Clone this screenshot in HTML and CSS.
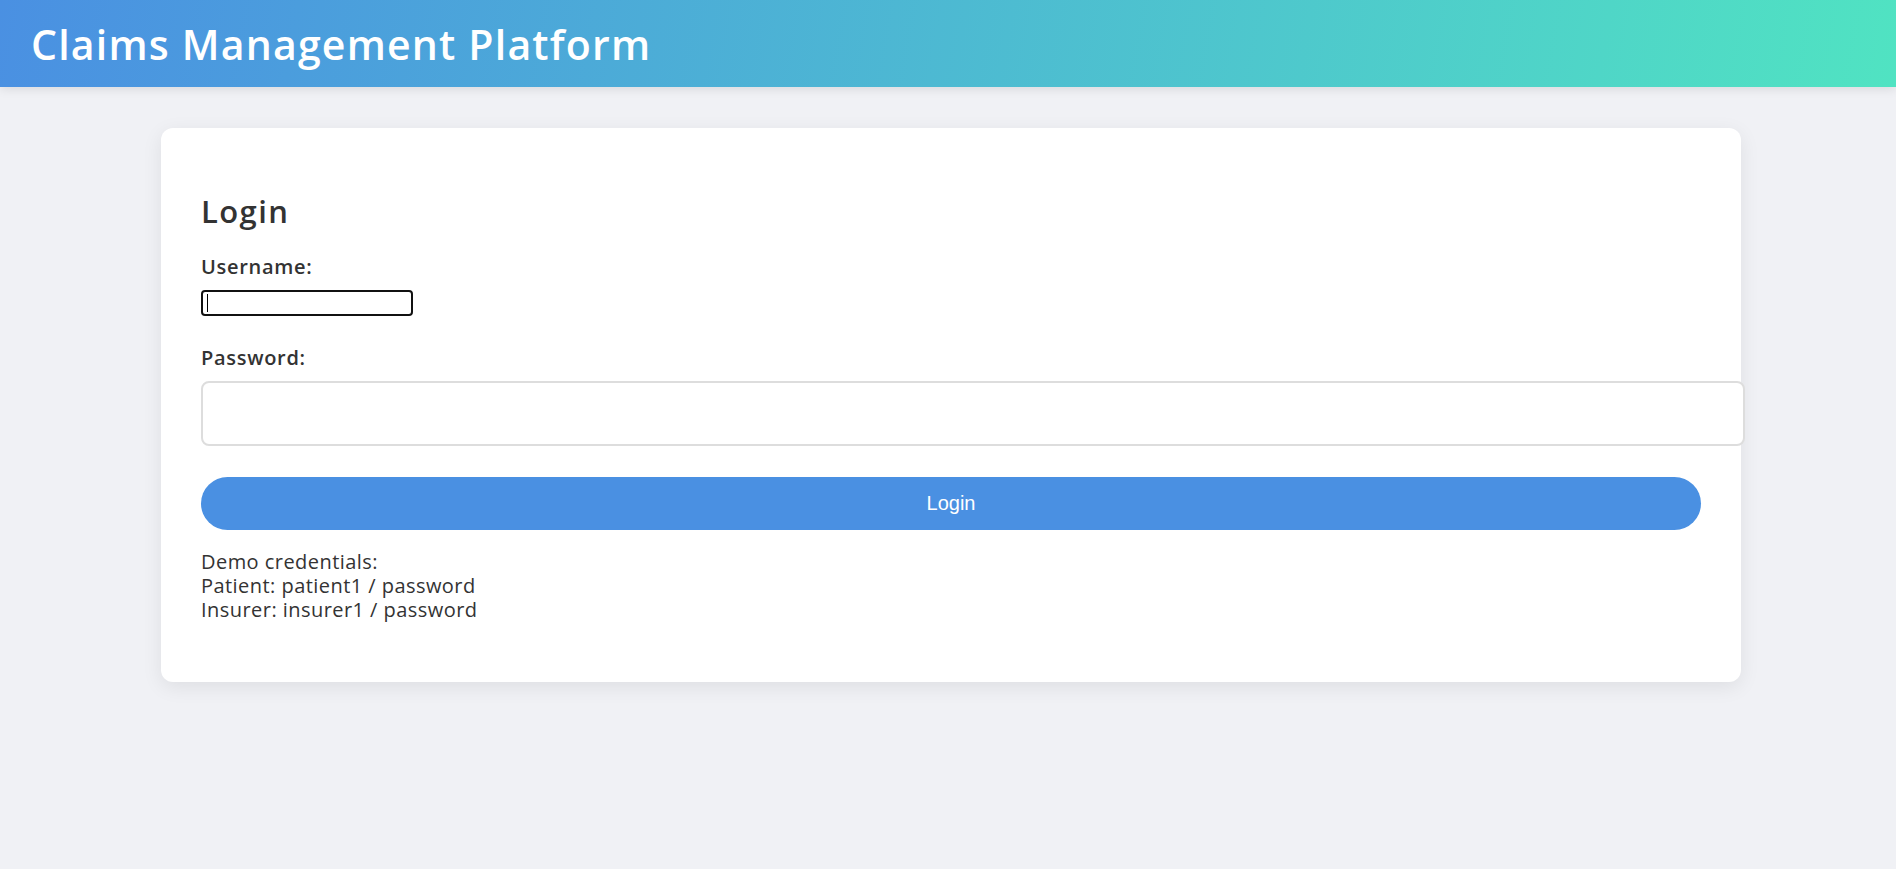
FILE: index.html
```html
<!DOCTYPE html>
<html lang="en">
<head>
<meta charset="utf-8">
<title>Claims Management Platform</title>
<link rel="stylesheet" href="styles.css">
</head>
<body>
<header class="app-header">
  <h1 class="app-title">Claims Management Platform</h1>
</header>
<main class="app-main">
  <section class="card">
    <h2 class="login-title">Login</h2>
    <form class="login-form">
      <div class="form-group">
        <label class="field-label" for="username">Username:</label>
        <div class="plain-wrap">
          <input class="plain-input" id="username" type="text">
          <span class="caret"></span>
        </div>
      </div>
      <div class="form-group form-group-last">
        <label class="field-label" for="password">Password:</label>
        <input class="text-input" id="password" type="password">
      </div>
      <button class="login-btn" type="button">Login</button>
    </form>
    <p class="demo">Demo credentials:<br>Patient: patient1 / password<br>Insurer: insurer1 / password</p>
  </section>
</main>
</body>
</html>
```

FILE: styles.css
```css
html, body {
  margin: 0;
  padding: 0;
}

body {
  background: #f0f1f5;
  font-family: "Open Sans", "Liberation Sans", sans-serif;
  color: #333333;
  min-height: 869px;
}

.app-header {
  height: 87px;
  box-sizing: border-box;
  display: flex;
  align-items: center;
  padding: 0 31px;
  background: linear-gradient(100deg, #4a90e2 0%, #50e3c2 100%);
  box-shadow: 0 2px 10px rgba(0, 0, 0, 0.1);
}

.app-title {
  margin: 0;
  font-size: 41px;
  line-height: 56px;
  font-weight: 600;
  letter-spacing: 1.2px;
  color: #ffffff;
}

.app-main {
  padding: 41px 0 0 6px;
}

.card {
  max-width: 1500px;
  margin: 0 auto;
  padding: 40px;
  background: #ffffff;
  border-radius: 12px;
  box-shadow: 0 5px 20px rgba(0, 0, 0, 0.08);
}

.login-title {
  margin: 25px 0;
  font-size: 31px;
  line-height: 37px;
  font-weight: 600;
  letter-spacing: 1.4px;
  color: #333333;
}

.form-group {
  margin-bottom: 30px;
}

.form-group-last {
  margin-bottom: 31px;
}

.field-label {
  display: block;
  margin-bottom: 11px;
  font-size: 20px;
  line-height: 24px;
  font-weight: 600;
  letter-spacing: 0.7px;
  color: #333333;
}

.plain-wrap {
  position: relative;
  width: 212px;
  height: 26px;
}

.plain-input {
  display: block;
  width: 212px;
  height: 26px;
  box-sizing: border-box;
  margin: 0;
  padding: 0 4px;
  border: 2px solid #111111;
  border-radius: 4px;
  outline: none;
  background: #ffffff;
  font-size: 16px;
}

.caret {
  position: absolute;
  left: 6px;
  top: 4px;
  width: 1px;
  height: 18px;
  background: #000000;
}

.text-input {
  display: block;
  width: 100%;
  height: 21px;
  margin: 0;
  padding: 20px;
  border: 2px solid #dddddd;
  border-radius: 8px;
  outline: none;
  background: #ffffff;
  font-size: 20px;
  font-family: inherit;
}

.login-btn {
  display: block;
  width: 100%;
  height: 53px;
  margin: 0;
  border: none;
  border-radius: 27px;
  background: #4a90e2;
  color: #ffffff;
  font-family: "Liberation Sans", Arial, sans-serif;
  font-size: 20px;
  cursor: pointer;
}

.demo {
  margin: 20px 0;
  font-size: 20px;
  line-height: 24px;
  letter-spacing: 0.45px;
  color: #333333;
}
```
